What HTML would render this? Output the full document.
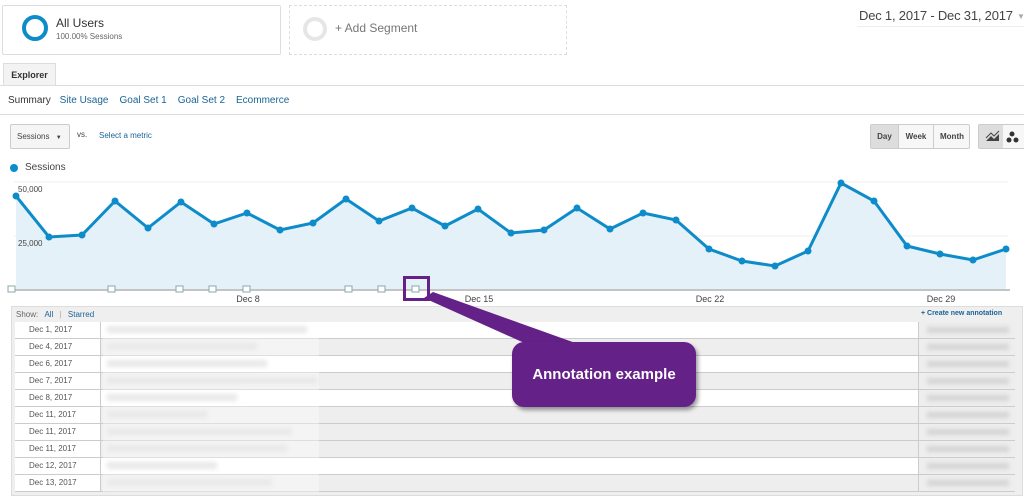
<!DOCTYPE html>
<html><head><meta charset="utf-8"><style>
body{margin:0;width:1024px;height:497px;background:#fff;font-family:"Liberation Sans",sans-serif;position:relative;overflow:hidden;color:#333}
.a{position:absolute;white-space:nowrap}
.row{position:absolute;left:15px;width:1000px;height:16px;border-bottom:1px solid #ccc}
.d{position:absolute;left:0;top:0;width:86px;height:16px;background:#fff;font-size:8px;line-height:16px;color:#555;padding-left:14px;box-sizing:border-box;border-right:1px solid #ccc}
.bl{position:absolute;left:92px;top:4px;height:7px;background:#ddd;filter:blur(2px)}
.br{position:absolute;left:903px;top:0;width:97px;height:16px;background:#eee;border-left:1px solid #ccc}
.br:after{content:"";position:absolute;left:8px;top:5px;width:82px;height:6px;background:#d4d4d4;filter:blur(2px)}
</style></head><body>
<div class="a" style="left:2px;top:5px;width:277px;height:48px;border:1px solid #ddd;border-radius:2px"></div>
<div class="a" style="left:22px;top:15px;border:4px solid #0d8cc9;border-radius:50%;width:18px;height:18px"></div>
<div class="a" style="left:56px;top:16px;font-size:12px;color:#333">All Users</div>
<div class="a" style="left:56px;top:32px;font-size:8px;color:#666">100.00% Sessions</div>
<div class="a" style="left:289px;top:5px;width:276px;height:48px;border:1px dashed #ddd"></div>
<div class="a" style="left:303px;top:17px;width:16px;height:16px;border:4px solid #e6e6e6;border-radius:50%"></div>
<div class="a" style="left:335px;top:21px;font-size:12px;color:#777">+ Add Segment</div>
<div class="a" style="left:859px;top:8px;font-size:13px;color:#444;letter-spacing:-0.2px">Dec 1, 2017 - Dec 31, 2017</div>
<div class="a" style="left:1017px;top:12px;font-size:8px;color:#aaa">▼</div>
<div class="a" style="left:857px;top:26px;width:167px;height:1px;background:#eee"></div>
<div class="a" style="left:3px;top:63px;width:51px;height:22px;background:#f3f3f3;border:1px solid #ddd;border-bottom:none;font-size:9px;font-weight:bold;line-height:22px;text-align:center;color:#333">Explorer</div>
<div class="a" style="left:0;top:85px;width:1024px;height:1px;background:#ddd"></div>
<div class="a" style="left:8px;top:95px;font-size:10px;color:#333">Summary <span style="color:#1a6496;margin-left:6px">Site Usage</span><span style="color:#1a6496;margin-left:11px">Goal Set 1</span><span style="color:#1a6496;margin-left:11px">Goal Set 2</span><span style="color:#1a6496;margin-left:11px">Ecommerce</span></div>
<div class="a" style="left:0;top:114px;width:1024px;height:1px;background:#ddd"></div>
<div class="a" style="left:10px;top:124px;width:52px;height:23px;border:1px solid #ccc;background:#f5f5f5;border-radius:2px;font-size:8px;line-height:23px;padding-left:6px;color:#444">Sessions <span style="font-size:6px;margin-left:4px">▼</span></div>
<div class="a" style="left:77px;top:130px;font-size:8px;color:#444">vs.</div>
<div class="a" style="left:99px;top:131px;font-size:8px;color:#1a6496">Select a metric</div>
<div class="a" style="left:870px;top:124px;width:98px;height:23px;border:1px solid #ccc;border-radius:2px;background:#f7f7f7;font-size:8px;font-weight:bold;line-height:23px;color:#444">
<span class="a" style="left:0;width:27px;height:23px;background:#ddd;text-align:center">Day</span><span class="a" style="left:27px;width:34px;text-align:center;border-left:1px solid #ccc">Week</span><span class="a" style="left:62px;width:36px;text-align:center;border-left:1px solid #ccc">Month</span></div>
<div class="a" style="left:978px;top:124px;width:46px;height:23px;border:1px solid #ccc;border-radius:2px;background:#f7f7f7"><div class="a" style="left:0;top:0;width:24px;height:23px;background:#ddd"></div>
<svg class="a" style="left:4px;top:4px" width="40" height="16"><path d="M3 12 L8 7 L11 10 L16 5 L16 12 Z" fill="#444"/><path d="M3 9 L8 4 L11 7 L16 2" stroke="#444" fill="none"/><circle cx="29" cy="5" r="2.5" fill="#333"/><circle cx="26" cy="11" r="2.5" fill="#333"/><circle cx="33" cy="11" r="2.5" fill="#333"/></svg></div>
<div class="a" style="left:10px;top:164px;width:8px;height:8px;border-radius:50%;background:#0d8cc9"></div>
<div class="a" style="left:25px;top:162px;font-size:10px;color:#444">Sessions</div>
<svg class="a" style="left:0;top:175px" width="1024" height="130">
<line x1="14" y1="7" x2="1008" y2="7" stroke="#eee"/><line x1="14" y1="61" x2="1008" y2="61" stroke="#eee"/>
<polygon fill="#e5f1f8" points="16,114 16,21 49,62 82,60 115,26 148,53 181,27 214,49 247,38 280,55 313,48 346,24 379,46 412,33 445,51 478,34 511,58 544,55 577,33 610,54 643,38 676,45 709,74 742,86 775,91 808,76 841,8 874,26 907,71 940,79 973,85 1006,74 1006,114"/>
<text x="18" y="17" font-size="8" fill="#444" font-family="Liberation Sans">50,000</text>
<text x="18" y="71" font-size="8" fill="#444" font-family="Liberation Sans">25,000</text>
<polyline fill="none" stroke="#0d8cc9" stroke-width="3" points="16,21 49,62 82,60 115,26 148,53 181,27 214,49 247,38 280,55 313,48 346,24 379,46 412,33 445,51 478,34 511,58 544,55 577,33 610,54 643,38 676,45 709,74 742,86 775,91 808,76 841,8 874,26 907,71 940,79 973,85 1006,74"/>
<g fill="#0d8cc9"><circle cx="16" cy="21" r="3.5"/><circle cx="49" cy="62" r="3.5"/><circle cx="82" cy="60" r="3.5"/><circle cx="115" cy="26" r="3.5"/><circle cx="148" cy="53" r="3.5"/><circle cx="181" cy="27" r="3.5"/><circle cx="214" cy="49" r="3.5"/><circle cx="247" cy="38" r="3.5"/><circle cx="280" cy="55" r="3.5"/><circle cx="313" cy="48" r="3.5"/><circle cx="346" cy="24" r="3.5"/><circle cx="379" cy="46" r="3.5"/><circle cx="412" cy="33" r="3.5"/><circle cx="445" cy="51" r="3.5"/><circle cx="478" cy="34" r="3.5"/><circle cx="511" cy="58" r="3.5"/><circle cx="544" cy="55" r="3.5"/><circle cx="577" cy="33" r="3.5"/><circle cx="610" cy="54" r="3.5"/><circle cx="643" cy="38" r="3.5"/><circle cx="676" cy="45" r="3.5"/><circle cx="709" cy="74" r="3.5"/><circle cx="742" cy="86" r="3.5"/><circle cx="775" cy="91" r="3.5"/><circle cx="808" cy="76" r="3.5"/><circle cx="841" cy="8" r="3.5"/><circle cx="874" cy="26" r="3.5"/><circle cx="907" cy="71" r="3.5"/><circle cx="940" cy="79" r="3.5"/><circle cx="973" cy="85" r="3.5"/><circle cx="1006" cy="74" r="3.5"/></g>
<line x1="10" y1="115" x2="1010" y2="115" stroke="#888"/>
<g fill="#fff" stroke="#8aa"><rect x="8" y="111" width="7" height="6"/><rect x="108" y="111" width="7" height="6"/><rect x="176" y="111" width="7" height="6"/><rect x="209" y="111" width="7" height="6"/><rect x="243" y="111" width="7" height="6"/><rect x="345" y="111" width="7" height="6"/><rect x="378" y="111" width="7" height="6"/><rect x="412" y="111" width="7" height="6"/></g>
<g font-size="9" fill="#444" font-family="Liberation Sans" text-anchor="middle"><text x="248" y="127">Dec 8</text><text x="479" y="127">Dec 15</text><text x="710" y="127">Dec 22</text><text x="941" y="127">Dec 29</text></g>
</svg>
<div class="a" style="left:11px;top:306px;width:1010px;height:188px;background:#efefef;border:1px solid #ddd"></div>
<div class="a" style="left:16px;top:310px;font-size:8px;color:#666">Show: <span style="color:#1a6496;margin-left:4px">All</span> <span style="color:#aaa;margin:0 4px">|</span> <span style="color:#1a6496">Starred</span></div>
<div class="a" style="left:921px;top:310px;font-size:7px;font-weight:bold;color:#1a6496">+ Create new annotation</div>
<div class="row" style="top:322px;background:#fff"><div class="d">Dec 1, 2017</div><div class="bl" style="width:200px"></div><div class="br"></div></div>
<div class="row" style="top:339px;background:#eee"><div class="d">Dec 4, 2017</div><div class="bl" style="width:150px"></div><div class="br"></div></div>
<div class="row" style="top:356px;background:#fff"><div class="d">Dec 6, 2017</div><div class="bl" style="width:160px"></div><div class="br"></div></div>
<div class="row" style="top:373px;background:#eee"><div class="d">Dec 7, 2017</div><div class="bl" style="width:210px"></div><div class="br"></div></div>
<div class="row" style="top:390px;background:#fff"><div class="d">Dec 8, 2017</div><div class="bl" style="width:130px"></div><div class="br"></div></div>
<div class="row" style="top:407px;background:#eee"><div class="d">Dec 11, 2017</div><div class="bl" style="width:100px"></div><div class="br"></div></div>
<div class="row" style="top:424px;background:#eee"><div class="d">Dec 11, 2017</div><div class="bl" style="width:185px"></div><div class="br"></div></div>
<div class="row" style="top:441px;background:#eee"><div class="d">Dec 11, 2017</div><div class="bl" style="width:180px"></div><div class="br"></div></div>
<div class="row" style="top:458px;background:#fff"><div class="d">Dec 12, 2017</div><div class="bl" style="width:110px"></div><div class="br"></div></div>
<div class="row" style="top:475px;background:#eee"><div class="d">Dec 13, 2017</div><div class="bl" style="width:165px"></div><div class="br"></div></div>
<div class="a" style="left:103px;top:322px;width:216px;height:170px;background:rgba(255,255,255,0.35)"></div>
<svg class="a" style="left:0;top:0" width="1024" height="497">
<polygon points="424,298 433,292 595,350 540,350" fill="#642187"/>
<rect x="404.5" y="277.5" width="24" height="22" fill="none" stroke="#642187" stroke-width="3"/>
</svg>
<div class="a" style="left:512px;top:342px;width:184px;height:65px;background:#642187;border-radius:12px;box-shadow:2px 3px 4px rgba(0,0,0,0.4);color:#fff;font-weight:bold;font-size:15px;line-height:65px;text-align:center">Annotation example</div>
</body></html>
